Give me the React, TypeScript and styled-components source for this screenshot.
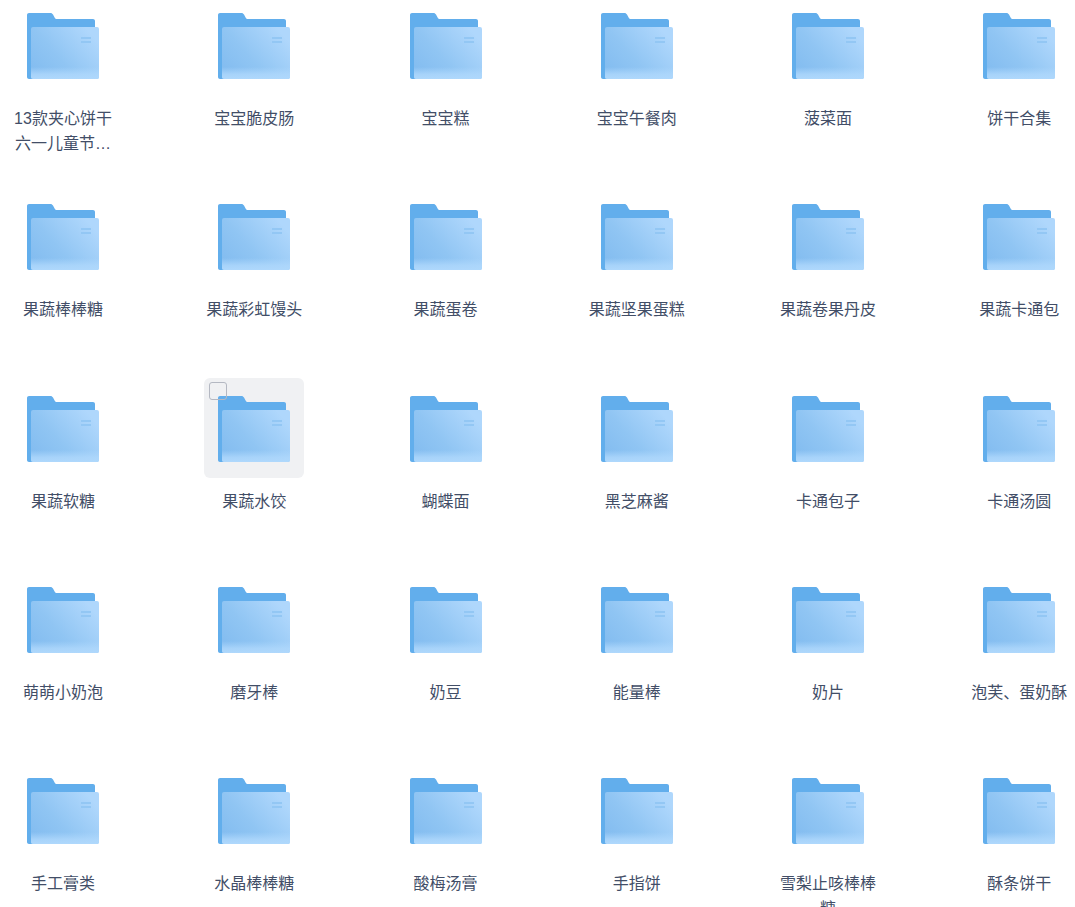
import React, { FunctionComponent } from "react";
import styled, { createGlobalStyle } from "styled-components";

const names: string[] = [
	"13款夹心饼干六一儿童节礼物",
	"宝宝脆皮肠",
	"宝宝糕",
	"宝宝午餐肉",
	"菠菜面",
	"饼干合集",
	"果蔬棒棒糖",
	"果蔬彩虹馒头",
	"果蔬蛋卷",
	"果蔬坚果蛋糕",
	"果蔬卷果丹皮",
	"果蔬卡通包",
	"果蔬软糖",
	"果蔬水饺",
	"蝴蝶面",
	"黑芝麻酱",
	"卡通包子",
	"卡通汤圆",
	"萌萌小奶泡",
	"磨牙棒",
	"奶豆",
	"能量棒",
	"奶片",
	"泡芙、蛋奶酥",
	"手工膏类",
	"水晶棒棒糖",
	"酸梅汤膏",
	"手指饼",
	"雪梨止咳棒棒糖",
	"酥条饼干",
];

const FolderIcon: FunctionComponent<{ id: number }> = ({ id }) => (
	<svg width="72" height="66" viewBox="0 0 72 66">
		<defs>
			<linearGradient id={`front-${id}`} x1="0.1" y1="0.9" x2="1" y2="0.3">
				<stop offset="0" stopColor="#84bdf0" />
				<stop offset="0.4" stopColor="#90c5f3" />
				<stop offset="1" stopColor="#afd7fc" />
			</linearGradient>
			<linearGradient id={`band-${id}`} x1="0" y1="0" x2="0" y2="1">
				<stop offset="0" stopColor="#afd8fc" stopOpacity="0" />
				<stop offset="0.6" stopColor="#afd8fc" stopOpacity="0.8" />
				<stop offset="1" stopColor="#afd8fc" />
			</linearGradient>
		</defs>
		<path
			d="M2 0H23.5C24.6 0 25.4.5 26 1.6L28 5.2C28.3 5.8 28.8 6 29.4 6H66C67.1 6 68 6.9 68 8V64C68 65.1 67.1 66 66 66H2C.9 66 0 65.1 0 64V2C0 .9.9 0 2 0Z"
			fill="#62aeec"
		/>
		<rect x="4" y="14" width="68" height="52" rx="2" fill={`url(#front-${id})`} />
		<path d="M4 54H72V64C72 65.1 71.1 66 70 66H6C4.9 66 4 65.1 4 64Z" fill={`url(#band-${id})`} />
		<rect x="54" y="24" width="10" height="2" fill="#93c7f4" />
		<rect x="54" y="28" width="10" height="2" fill="#93c7f4" />
	</svg>
);

const App: FunctionComponent = () => (
	<>
		<GlobalStyle />
		<Page>
			<Grid>
				{names.map((name, i) => (
					<Item key={name}>
						<Thumb $active={i === 13}>
							{i === 13 && <Check />}
							<FolderIcon id={i} />
						</Thumb>
						<Name>{name}</Name>
					</Item>
				))}
			</Grid>
		</Page>
	</>
);

export default App;

const GlobalStyle = createGlobalStyle`
	html, body {
		margin: 0;
		padding: 0;
		background: #fff;
		overflow: hidden;
	}
`;

const Page = styled.div`
	height: 907px;
	overflow: hidden;
	font-family: "Liberation Sans", "Noto Sans CJK SC", sans-serif;
`;

const Grid = styled.section`
	display: grid;
	grid-template-columns: repeat(6, 191.25px);
	grid-auto-rows: 191.25px;
	margin-top: -5px;
	padding-left: 13px;
`;

const Item = styled.div`
	width: 100px;
`;

const Thumb = styled.div<{ $active: boolean }>`
	position: relative;
	box-sizing: border-box;
	width: 100px;
	height: 100px;
	padding: 18px 0 0 14px;
	border-radius: 6px;
	background: ${(p) => (p.$active ? "#f0f1f3" : "transparent")};
`;

const Check = styled.span`
	position: absolute;
	left: 5px;
	top: 4px;
	box-sizing: border-box;
	width: 18px;
	height: 18px;
	border: 1px solid #b4b8c2;
	border-radius: 3px;
`;

const Name = styled.div`
	margin-top: 11px;
	font-size: 16px;
	line-height: 25px;
	color: #424e67;
	text-align: center;
	display: -webkit-box;
	-webkit-box-orient: vertical;
	-webkit-line-clamp: 2;
	overflow: hidden;
	word-break: break-all;
`;
